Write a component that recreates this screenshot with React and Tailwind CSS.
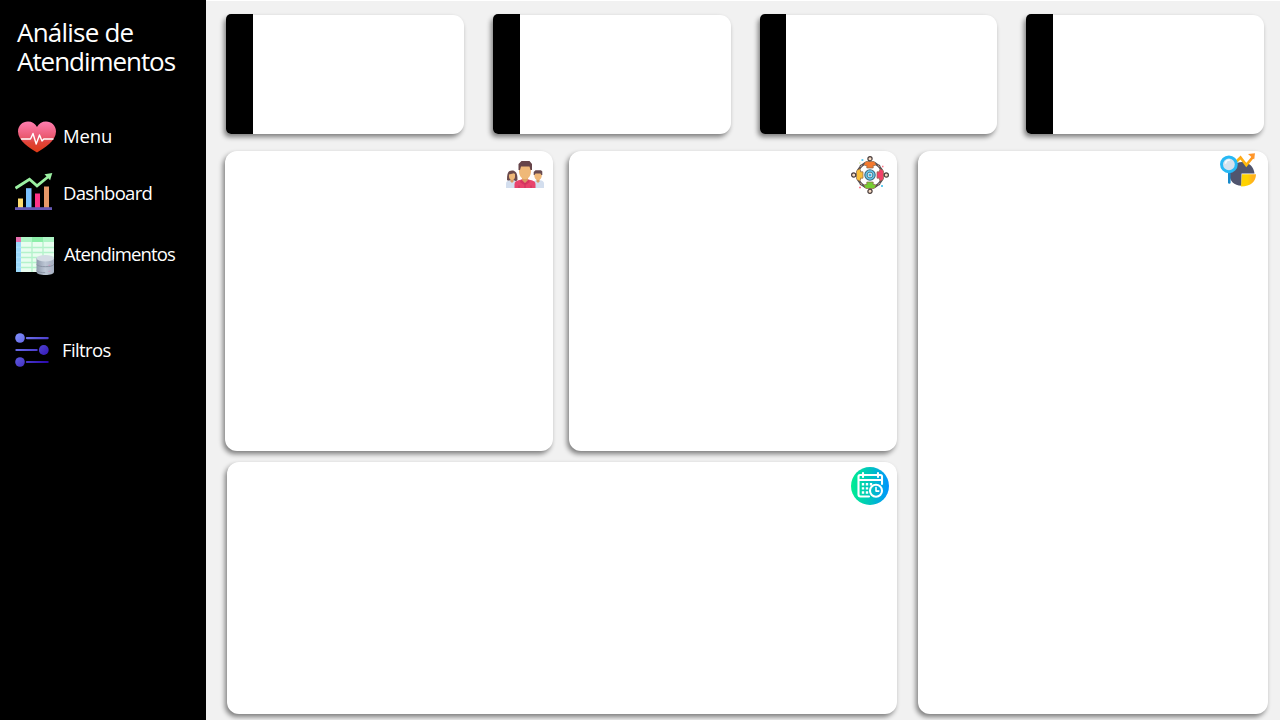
const cardShadow = "shadow-[-2px_3px_5px_rgba(0,0,0,0.48)]";

function HeartIcon() {
  return (
    <svg width="38" height="32" viewBox="0 0 38 32">
      <defs>
        <linearGradient id="heart" x1="0" y1="0" x2="0" y2="1">
          <stop offset="0" stopColor="#ff7eb0" />
          <stop offset="0.5" stopColor="#ea5870" />
          <stop offset="0.68" stopColor="#e04438" />
          <stop offset="1" stopColor="#dd3a16" />
        </linearGradient>
      </defs>
      <path d="M19 31.5C12 27 0 20 0 10.5 0 4.500 4.500 .5 10 .5c4 0 7.300 2 9 5.500C20.700 2.500 24 .5 28 .5c5.500 0 10 4 10 10C38 20 26 27 19 31.500Z" fill="url(#heart)" />
      <path d="M3.500 18h9l2.500-5.500 3.200 10.500 3.300-9 2.500 6 1.800-2h9.200" fill="none" stroke="#fff" strokeWidth="1.400" strokeLinejoin="round" strokeLinecap="round" />
    </svg>
  );
}

function BarsIcon() {
  return (
    <svg width="38" height="38" viewBox="0 0 38 38">
      <rect x="3" y="25.500" width="5" height="9.500" fill="#ffdc70" />
      <rect x="11" y="15.200" width="5.500" height="19.800" fill="#7ac2ff" />
      <rect x="20" y="20.500" width="5" height="14.500" fill="#ff3388" />
      <rect x="29" y="13.500" width="5" height="21.500" fill="#e59768" />
      <rect x="0" y="34.200" width="37" height="2.800" fill="#6658b5" />
      <path d="M0.500 15.200 14.500 6.300l7.500 6.500L33.500 3.500" fill="none" stroke="#9bf0a2" strokeWidth="2.800" />
      <path d="M29.500 1.200 37.300 0l-2.200 7.300Z" fill="#9bf0a2" />
    </svg>
  );
}

function SheetIcon() {
  return (
    <svg width="39" height="39" viewBox="0 0 39 39">
      <defs>
        <linearGradient id="disk" x1="0" y1="0" x2="1" y2="0">
          <stop offset="0" stopColor="#8f9aac" />
          <stop offset="0.5" stopColor="#bdc7d5" />
          <stop offset="1" stopColor="#a5afc0" />
        </linearGradient>
      </defs>
      <rect width="38" height="35" fill="#e9fdf0" />
      <rect x="5" width="33" height="5" fill="#aef5c6" />
      <rect x="16" width="11" height="5" fill="#8ceea9" />
      <rect y="5" width="5" height="30" fill="#9bd9fb" />
      <rect width="5" height="5" fill="#e66fae" />
      <path d="M5 10.500h33M5 15.500h33M5 20.500h33M5 25.500h33M5 30.500h33M16 5v30M27 5v30" stroke="#b4f3cb" strokeWidth="1.400" />
      <path d="M0 10.200h5M0 15.200h5M0 20.200h5M0 25.200h5M0 30.200h5" stroke="#b8e5ff" strokeWidth="0.800" />
      <path d="M20.500 21v14c0 1.700 4 3 8.800 3s8.700-1.300 8.700-3V21Z" fill="url(#disk)" />
      <path d="M20.500 27.300c1 1.700 4.500 2.400 8.800 2.400s7.700-.7 8.700-2.400M20.500 33.300c1 1.700 4.500 2.400 8.800 2.400" fill="none" stroke="#8791a2" strokeWidth="0.900" />
      <ellipse cx="29.300" cy="21.200" rx="8.800" ry="3.200" fill="#d4dce5" />
      <path d="M32.500 28.500l2-.5M32.500 34.500l2-.5" stroke="#cb9bbd" strokeWidth="1" />
    </svg>
  );
}

function FiltersIcon() {
  return (
    <svg width="34" height="34" viewBox="0 0 34 34">
      <defs>
        <linearGradient id="filters" gradientUnits="userSpaceOnUse" x1="0" y1="0" x2="32" y2="34">
          <stop offset="0" stopColor="#8293ff" />
          <stop offset="1" stopColor="#2500a8" />
        </linearGradient>
      </defs>
      <g fill="url(#filters)">
        <circle cx="5" cy="5" r="4.800" />
        <rect x="10.800" y="4" width="23" height="2.200" rx="1.100" />
        <rect x="0.300" y="15.900" width="22.500" height="2.200" rx="1.100" />
        <circle cx="28.800" cy="17" r="4.900" />
        <circle cx="5" cy="29" r="4.800" />
        <rect x="10.800" y="27.900" width="23" height="2.200" rx="1.100" />
      </g>
    </svg>
  );
}

function PeopleIcon() {
  return (
    <svg width="38" height="28" viewBox="0 0 38 28">
      <path d="M1 18.500C1 12 2.500 9.500 6 9.500s5.500 2.500 5.500 9l-1 1.500H2Z" fill="#6b4a4c" />
      <path d="M0 27v-4.500c0-2 1.500-3 4-3.300h4l4 2V27Z" fill="#d3deee" />
      <path d="M4.500 17h3v3.500L6 22l-1.500-1.500Z" fill="#d99b62" />
      <path d="M3 13.500l5-1.200 1 1V15.500c0 2-1.200 3.500-3 3.500s-3-1.500-3-3.500Z" fill="#efb878" />
      <path d="M26 27v-6l4-1.800h4c2.500.3 4 1.300 4 3.300V27Z" fill="#d3deee" />
      <path d="M30.500 17h3v3.500L32 22l-1.500-1.500Z" fill="#d99b62" />
      <path d="M28.300 12h7.500v2.500c0 2.500-1.500 4.500-3.800 4.500s-3.700-2-3.700-4.500Z" fill="#efb878" />
      <path d="M27.700 14v-3l1.800-1.800h5.500l1.300 1.300V14h-1l-.8-1.600h-5l-1 1.600Z" fill="#684b50" />
      <path d="M8.500 27v-3.500c0-3 2-4 7-5h7c5 1 7 2 7 5V27Z" fill="#e8436c" />
      <path d="M15.500 18.500 19 22l3.500-3.500 1.200 2.500-3.200 2.500h-3L14 21Z" fill="#d63660" />
      <path d="M19 22v5M13 24.500V27M25 24.500V27" stroke="#bf3259" strokeWidth="0.800" />
      <path d="M16 15h6v4l-3 3-3-3Z" fill="#d99b62" />
      <path d="M13 5h12v5c0 4.500-2.300 8.300-6 8.300S13 14.500 13 10Z" fill="#efb878" />
      <path d="M12.500 9V3l3-3h8l2.500 3V9h-1.500l-1-3.500h-8.500l-1 3.500Z" fill="#664449" />
    </svg>
  );
}

function Member({ angle, color }) {
  return (
    <g transform={`rotate(${angle} 19 19)`}>
      <path d="M14.500 7 9.200 10.800M23.500 7l5.300 3.800" stroke="#514a50" strokeWidth="2.300" />
      <path d="M11.200 9.400 9.200 10.800M26.800 9.400l2 1.400" stroke="#cfa68b" strokeWidth="1" />
      <path d="M14.800 5.500h8.400l2 3.200-2.200 1.100-.8-.4v2.600h-6.400V9.400l-.8.4-2.200-1.100Z" fill={color} stroke="#8b6548" strokeWidth="0.700" />
      <circle cx="19" cy="2.700" r="2.100" fill="#f8dcc5" stroke="#493d3b" strokeWidth="1.200" />
    </g>
  );
}

function TeamIcon() {
  return (
    <svg width="38" height="38" viewBox="0 0 38 38">
      <Member angle={0} color="#f5792e" />
      <Member angle={90} color="#f24168" />
      <Member angle={180} color="#76cd32" />
      <Member angle={270} color="#fac03a" />
      <circle cx="19" cy="19" r="5.200" fill="#65c9ed" stroke="#426b7e" strokeWidth="1.100" />
      <circle cx="19" cy="19" r="2.900" fill="#e3f5fa" stroke="#426b7e" strokeWidth="0.900" />
      <circle cx="19" cy="19" r="1.500" fill="#39afe0" />
      <path d="M10.500 4h1.800M30 30h2" stroke="#65ccef" strokeWidth="1.800" />
      <path d="M8 31.500h2M31 10.500h1.500" stroke="#ff7587" strokeWidth="1.600" />
      <path d="M8 7h1.500" stroke="#c9e794" strokeWidth="1.200" />
    </svg>
  );
}

function SearchChartIcon() {
  return (
    <svg width="37" height="35" viewBox="0 0 37 35">
      <defs>
        <linearGradient id="trend" x1="0" y1="1" x2="1" y2="0">
          <stop offset="0" stopColor="#ffd000" />
          <stop offset="1" stopColor="#ff8b25" />
        </linearGradient>
        <linearGradient id="slice">
          <stop offset="0.450" stopColor="#ffd200" />
          <stop offset="0.750" stopColor="#ffb21c" />
        </linearGradient>
      </defs>
      <path d="M22 9c7 0 12 5 12.500 11.500H21.500v12.200C14 32.500 9.500 28 9.500 21.500 9.500 14.500 15 9 22 9Z" fill="#50556e" />
      <path d="M22 21.200h14C36 28 31 33.500 21 33.500Z" fill="url(#slice)" />
      <path d="M9.300 19v10.500" stroke="#1689ca" strokeWidth="2.600" strokeLinecap="round" />
      <path d="M16.500 8.500 20.500 4.500l5.800 7.500 7-8.500" fill="none" stroke="url(#trend)" strokeWidth="2.700" />
      <path d="M28 1 35 .2l-.8 6.300Z" fill="#ff962b" />
      <circle cx="8.900" cy="11.300" r="7.400" fill="#d4e2ee" stroke="#27b9f5" strokeWidth="3" />
      <path d="M5.500 10c.5-2 1.800-3 3.800-3" fill="none" stroke="#f4fbff" strokeWidth="1.700" strokeLinecap="round" />
    </svg>
  );
}

function CalendarIcon() {
  return (
    <svg width="38" height="38" viewBox="0 0 38 38">
      <defs>
        <linearGradient id="calendar">
          <stop offset="0" stopColor="#00ee91" />
          <stop offset="0.500" stopColor="#00c4be" />
          <stop offset="1" stopColor="#0094ff" />
        </linearGradient>
      </defs>
      <circle cx="19" cy="19" r="19" fill="url(#calendar)" />
      <g fill="none" stroke="#fff" strokeWidth="2.100" strokeLinejoin="round" strokeLinecap="round">
        <path d="M18 29.500H9.500c-1.300 0-2-.7-2-2V9.500C7.500 8.500 8 8 9 8h20.500c1 0 1.500.5 1.500 1.500V17M8 13h23M12 6v4M27 6v4" />
        <circle cx="25" cy="23.800" r="6" />
        <path d="M25 20.500v3.600h2.800" strokeWidth="1.600" />
      </g>
      <path d="M10.800 17.300h10.500M10.800 21.400h6.500M10.800 25.500h6.500" stroke="#fff" strokeWidth="2.400" strokeDasharray="2.400 1.600" />
    </svg>
  );
}

function NavItem({ icon, label, className, iconClass, textClass }) {
  return (
    <a className={`flex items-center ${className}`}>
      <span className={`shrink-0 ${iconClass}`}>{icon}</span>
      <span className={`whitespace-nowrap text-[18.500px] leading-6 ${textClass}`}>{label}</span>
    </a>
  );
}

function Kpi() {
  return (
    <div className={`mt-px flex h-[119px] w-[237.750px] rounded-l-[5px] rounded-r-[11px] bg-white ${cardShadow}`}>
      <div className="-mt-px h-[120px] w-[26.750px] rounded-l-[5px] bg-black" />
    </div>
  );
}

function Panel({ className, children }) {
  return <section className={`flex items-start justify-end rounded-xl bg-white ${cardShadow} ${className}`}>{children}</section>;
}

export default function App() {
  return (
    <div className="flex h-[720px] w-[1280px] overflow-hidden bg-[#f1f1f1] font-['Open_Sans',sans-serif]">
      <aside className="w-[206px] shrink-0 bg-black pt-[18px] text-white">
        <h1 className="w-[190px] pl-[17px] text-[26px] leading-[29px] tracking-[-1.050px]">
          <span className="tracking-[-0.780px]">Análise de</span> Atendimentos
        </h1>
        <nav>
          <NavItem icon={<HeartIcon />} label="Menu" className="mt-[45px] h-8 pl-[18px]" iconClass="w-[45px]" textClass="pb-0.5 tracking-[-0.100px]" />
          <NavItem icon={<BarsIcon />} label="Dashboard" className="mt-5 h-[38px] pl-[15px]" iconClass="w-[48px]" textClass="pt-0.5 tracking-[-0.700px]" />
          <NavItem icon={<SheetIcon />} label="Atendimentos" className="mt-[26px] h-[39px] pl-4" iconClass="w-[48px]" textClass="pb-1.5 tracking-[-0.880px]" />
          <NavItem icon={<FiltersIcon />} label="Filtros" className="mt-[57px] h-[34px] pl-[15px]" iconClass="w-[47px]" textClass="tracking-[-0.600px]" />
        </nav>
      </aside>
      <main className="w-[1074px] border-t border-white pt-[13px] pl-[19px]">
        <div className="flex w-[1039px] justify-between pl-px">
          <Kpi />
          <Kpi />
          <Kpi />
          <Kpi />
        </div>
        <div className="mt-[17px] flex gap-[21px]">
          <div className="flex w-[672px] flex-col gap-[11px]">
            <div className="flex gap-4">
              <Panel className="h-[300px] w-[328px] pt-[10px] pr-[9px]"><PeopleIcon /></Panel>
              <Panel className="h-[300px] w-[328px] pt-[5px] pr-2"><TeamIcon /></Panel>
            </div>
            <Panel className="ml-0.5 h-[252px] w-[670px] pt-[5px] pr-2"><CalendarIcon /></Panel>
          </div>
          <Panel className="h-[563px] w-[350px] pt-[2px] pr-[11px]"><SearchChartIcon /></Panel>
        </div>
      </main>
    </div>
  );
}
